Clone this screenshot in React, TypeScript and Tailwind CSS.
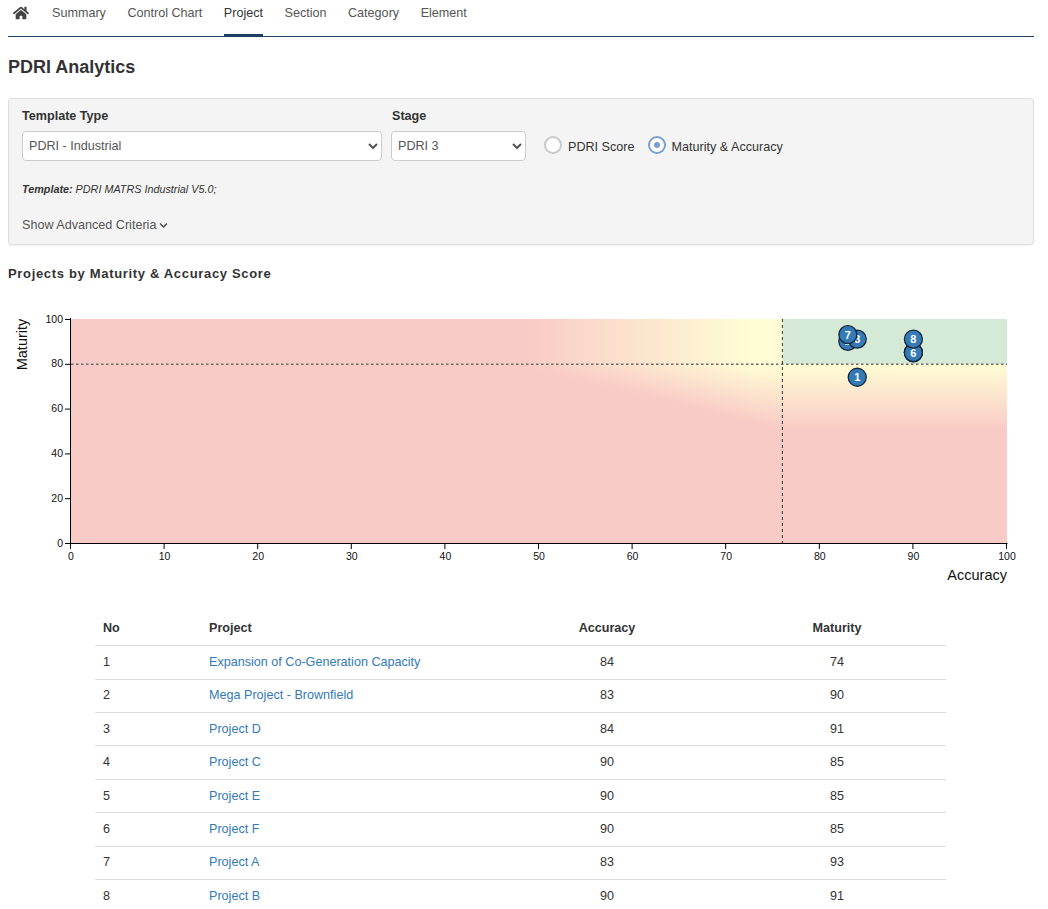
import { FaChevronDown, FaHome } from 'react-icons/fa';

const tabs = ['Summary', 'Control Chart', 'Project', 'Section', 'Category', 'Element'];

const rows = [
  { no: 1, name: 'Expansion of Co-Generation Capacity', accuracy: 84, maturity: 74 },
  { no: 2, name: 'Mega Project - Brownfield', accuracy: 83, maturity: 90 },
  { no: 3, name: 'Project D', accuracy: 84, maturity: 91 },
  { no: 4, name: 'Project C', accuracy: 90, maturity: 85 },
  { no: 5, name: 'Project E', accuracy: 90, maturity: 85 },
  { no: 6, name: 'Project F', accuracy: 90, maturity: 85 },
  { no: 7, name: 'Project A', accuracy: 83, maturity: 93 },
  { no: 8, name: 'Project B', accuracy: 90, maturity: 91 },
];

// chart geometry, in page pixels
const X0 = 71;
const X1 = 1007;
const Y0 = 543;
const Y1 = 319;
const sx = (v: number) => X0 + ((X1 - X0) * v) / 100;
const sy = (v: number) => Y0 - ((Y0 - Y1) * v) / 100;
const lineY = sy(80);
const lineX = sx(76);

const RED = [249, 203, 198];
const YELLOW = [255, 253, 213];

function mix(t: number) {
  const c = RED.map((r, i) => Math.round(r + (YELLOW[i] - r) * t));
  return `rgb(${c[0]},${c[1]},${c[2]})`;
}

// the fade below the 80 line gets deeper as accuracy gets closer to the threshold
const fadeStart = 525;
const slices: { x: number; t: number; depth: number }[] = [];
for (let x = fadeStart; x < lineX; x += 4) {
  const t = (x - fadeStart) / (lineX - fadeStart);
  slices.push({ x, t: Math.min(1, t * 1.15), depth: 4 + t * 62 });
}

function Chart() {
  return (
    <svg width={1048} height={290} viewBox="0 300 1048 290" className="block" style={{ fontFamily: '"Liberation Sans", Arial, sans-serif' }}>
      <defs>
        {slices.map((s) => (
          <linearGradient key={s.x} id={`s${s.x}`} x1="0" y1="0" x2="0" y2="1">
            <stop offset="0" stopColor={mix(s.t)} />
            <stop offset="1" stopColor={mix(0)} />
          </linearGradient>
        ))}
        <linearGradient id="right" x1="0" y1="0" x2="0" y2="1">
          <stop offset="0" stopColor={mix(1)} />
          <stop offset="1" stopColor={mix(0)} />
        </linearGradient>
      </defs>

      <rect x={X0} y={Y1} width={X1 - X0} height={Y0 - Y1} fill={mix(0)} />
      {slices.map((s) => (
        <g key={s.x}>
          <rect x={s.x} y={Y1} width={4.5} height={lineY - Y1} fill={mix(s.t)} />
          <rect x={s.x} y={lineY} width={4.5} height={s.depth} fill={`url(#s${s.x})`} />
        </g>
      ))}
      <rect x={lineX} y={lineY} width={X1 - lineX} height={66} fill="url(#right)" />
      <rect x={lineX} y={Y1} width={X1 - lineX} height={lineY - Y1} fill="#d4ead6" />

      <line x1={X0} x2={X1} y1={lineY + 0.5} y2={lineY + 0.5} stroke="#6b6b6b" strokeWidth={1.4} strokeDasharray="2.5 2.5" />
      <line x1={lineX} x2={lineX} y1={Y1} y2={Y0} stroke="#333" strokeWidth={1} strokeDasharray="3 3" />

      <line x1={X0 - 0.5} x2={X0 - 0.5} y1={Y1 - 1} y2={Y0 + 6} stroke="#000" />
      <line x1={X0 - 6} x2={X1 + 0.5} y1={Y0 + 0.5} y2={Y0 + 0.5} stroke="#000" />

      {[0, 20, 40, 60, 80, 100].map((v) => (
        <g key={v}>
          <line x1={X0 - 6} x2={X0} y1={sy(v) + 0.5} y2={sy(v) + 0.5} stroke="#000" />
          <text x={X0 - 8} y={sy(v) + 3.5} textAnchor="end" fontSize={10.5} fill="#111">{v}</text>
        </g>
      ))}
      {[0, 10, 20, 30, 40, 50, 60, 70, 80, 90, 100].map((v) => (
        <g key={v}>
          <line x1={sx(v) - 0.5} x2={sx(v) - 0.5} y1={Y0} y2={Y0 + 6} stroke="#000" />
          <text x={sx(v)} y={560} textAnchor="middle" fontSize={10.5} fill="#111">{v}</text>
        </g>
      ))}

      <text x={1007} y={580} textAnchor="end" fontSize={14.5} fill="#111">Accuracy</text>
      <text transform="translate(26.5 344.5) rotate(-90)" textAnchor="middle" fontSize={14.5} fill="#111">Maturity</text>

      {rows.map((r) => (
        <g key={r.no}>
          <circle cx={sx(r.accuracy)} cy={sy(r.maturity)} r={9} fill="#337ab7" stroke="#16283a" strokeWidth={1.3} />
          <text x={sx(r.accuracy)} y={sy(r.maturity) + 4} textAnchor="middle" fontSize={11} fontWeight={700} fill="#fff">{r.no}</text>
        </g>
      ))}
    </svg>
  );
}

function Radio({ label, checked }: { label: string; checked?: boolean }) {
  return (
    <label className="flex items-start gap-[6px] text-[12.6px] text-[#333]">
      {checked ? (
        <span className="flex h-[18px] w-[18px] items-center justify-center rounded-full border-2 border-[#7a9fd1] bg-white">
          <span className="h-[6px] w-[6px] rounded-full bg-[#7a9fd1]" />
        </span>
      ) : (
        <span className="h-[18px] w-[18px] rounded-full border-2 border-[#c8c8c8] bg-white" />
      )}
      <span className="mt-[4px] leading-[15px]">{label}</span>
    </label>
  );
}

export default function App() {
  return (
    <div className="h-[909px] w-[1048px] overflow-hidden bg-white text-[12.6px] text-[#333]" style={{ fontFamily: '"Liberation Sans", Arial, sans-serif' }}>
      <div className="px-2">
        {/* Tabs */}
        <nav className="flex h-[37px] w-[1026px] items-start border-b border-[#1d3f63]">
          <FaHome className="ml-[5px] mt-[5px] mr-[23px] h-[16px] w-[16px] text-[#444]" />
          <div className="flex gap-[21.5px]">
            {tabs.map((t) => (
              <a key={t} className={t === 'Project' ? 'h-[36px] border-b-2 border-[#1d3f63] pt-[6px] leading-[15px] text-[#333]' : 'h-[36px] pt-[6px] leading-[15px] text-[#555]'}>
                {t}
              </a>
            ))}
          </div>
        </nav>

        <h1 className="mt-[19px] text-[18px] font-bold leading-[22px] text-[#333]">PDRI Analytics</h1>

        {/* Filters */}
        <div className="mt-[20px] h-[147px] w-[1026px] rounded border border-[#ddd] bg-[#f4f4f4] px-[13px] pt-[10px] shadow-[0_1px_1px_rgba(0,0,0,0.05)]">
          <div className="flex items-start">
            <div className="w-[360px]">
              <div className="mb-[7px] font-bold leading-[15px]">Template Type</div>
              <select className="h-[30px] w-[360px] rounded border border-[#ccc] bg-white px-[2px] text-[12.6px] text-[#555]">
                <option>PDRI - Industrial</option>
              </select>
            </div>
            <div className="ml-[9px] w-[135px]">
              <div className="mb-[7px] pl-[1px] font-bold leading-[15px]">Stage</div>
              <select className="h-[30px] w-[135px] rounded border border-[#ccc] bg-white px-[2px] text-[12.6px] text-[#555]">
                <option>PDRI 3</option>
              </select>
            </div>
            <div className="ml-[18px] mt-[27px] flex gap-[13px]">
              <Radio label="PDRI Score" />
              <Radio label="Maturity & Accuracy" checked />
            </div>
          </div>
          <p className="mt-[21px] text-[10.8px] italic leading-[14px]">
            <b>Template:</b> PDRI MATRS Industrial V5.0;
          </p>
          <a className="mt-[22px] flex items-center gap-[3px] leading-[15px] text-[#555]">
            Show Advanced Criteria <FaChevronDown className="h-[9px] w-[9px] text-[#444]" />
          </a>
        </div>

        <h2 className="mt-[21px] text-[13px] font-bold leading-[15px] tracking-[0.67px] text-[#333]">Projects by Maturity &amp; Accuracy Score</h2>
      </div>

      <div className="mt-[19px] -mb-[10px]">
        <Chart />
      </div>

      {/* Results */}
      <table className="ml-[95px] mt-[32.3px] w-[851px] table-fixed border-collapse">
        <colgroup>
          <col className="w-[106px]" />
          <col className="w-[285px]" />
          <col className="w-[242px]" />
          <col className="w-[218px]" />
        </colgroup>
        <thead>
          <tr className="h-[33.5px] border-b border-[#ddd]">
            <th className="px-2 text-left font-bold">No</th>
            <th className="px-2 text-left font-bold">Project</th>
            <th className="text-center font-bold">Accuracy</th>
            <th className="text-center font-bold">Maturity</th>
          </tr>
        </thead>
        <tbody>
          {rows.map((r) => (
            <tr key={r.no} className="h-[33.4px] border-b border-[#ddd]">
              <td className="px-2">{r.no}</td>
              <td className="px-2"><a className="text-[#337ab7]">{r.name}</a></td>
              <td className="text-center">{r.accuracy}</td>
              <td className="text-center">{r.maturity}</td>
            </tr>
          ))}
        </tbody>
      </table>
    </div>
  );
}
